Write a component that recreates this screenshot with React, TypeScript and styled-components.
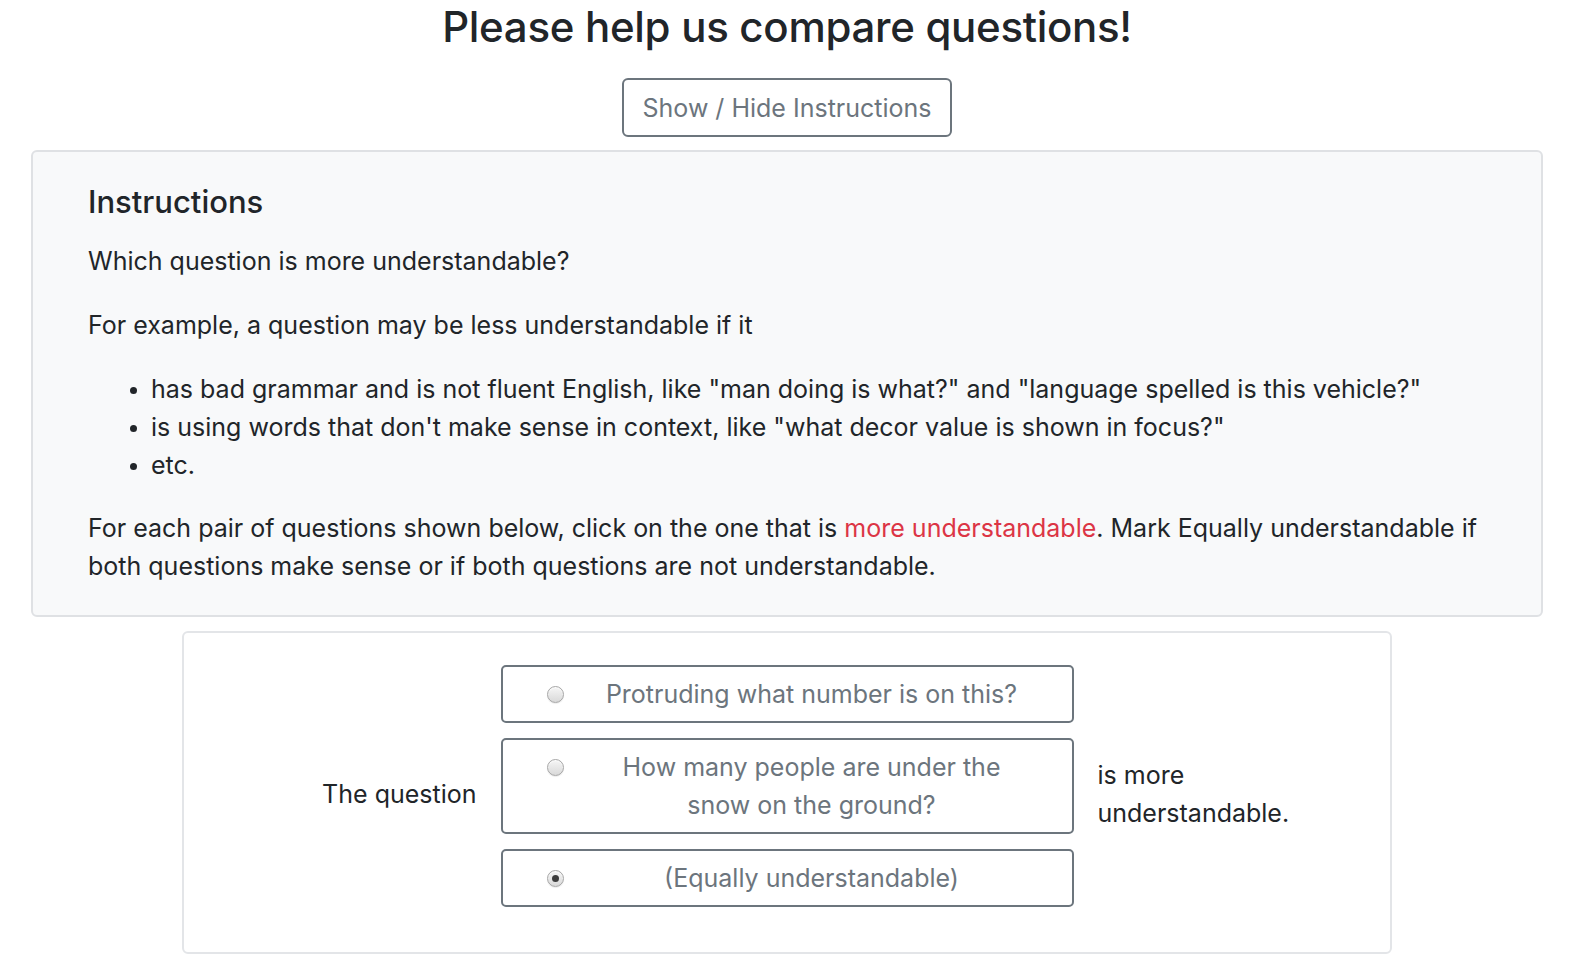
import React, { useState } from 'react';
import styled, { createGlobalStyle } from 'styled-components';

const GlobalStyle = createGlobalStyle`
  body {
    margin: 0;
    background: #fff;
    font-family: Inter, "Noto Sans", "Liberation Sans", sans-serif;
    color: #212529;
  }
`;

const Page = styled.div`
  display: flex;
  flex-direction: column;
  align-items: center;
  padding: 0 31px 12px;
`;

const Title = styled.h1`
  margin: 2px 0 0;
  font-size: 42px;
  font-weight: 500;
  line-height: 1.2;
  letter-spacing: -0.3px;
`;

const ToggleButton = styled.button`
  margin-top: 26px;
  width: 330px;
  height: 59px;
  border: 2px solid #6c757d;
  border-radius: 6px;
  background: #fff;
  color: #6c757d;
  font-family: inherit;
  font-size: 25px;
  cursor: pointer;
`;

const Panel = styled.section`
  align-self: stretch;
  margin-top: 13px;
  padding: 31px 55px 30px;
  background: #f8f9fa;
  border: 2px solid #dfe1e4;
  border-radius: 6px;
  font-size: 25px;
  line-height: 38px;
`;

const PanelHeading = styled.h3`
  margin: 0 0 22px;
  font-size: 31px;
  font-weight: 500;
  line-height: 37px;
`;

const Para = styled.p`
  margin: 0 0 26px;
  &:last-child {
    margin-bottom: 0;
  }
`;

const List = styled.ul`
  margin: 0 0 25px;
  padding-left: 63px;
  li::marker {
    font-size: 22px;
  }
`;

const Highlight = styled.span`
  color: #dc3545;
`;

const Card = styled.div`
  width: 1210px;
  box-sizing: border-box;
  margin-top: 14px;
  padding: 32px 0 30px;
  border: 2px solid #e3e5e8;
  border-radius: 6px;
  display: grid;
  grid-template-columns: 1fr 573px 1fr;
  column-gap: 24px;
  align-items: center;
  font-size: 25px;
  line-height: 38px;
`;

const SideLabel = styled.div<{ $align: 'left' | 'right' }>`
  text-align: ${({ $align }) => $align};
`;

const Options = styled.div`
  display: flex;
  flex-direction: column;
`;

const Option = styled.label`
  display: flex;
  align-items: center;
  min-height: 58px;
  box-sizing: border-box;
  margin-bottom: 15px;
  padding: 8px 0;
  border: 2px solid #6c757d;
  border-radius: 5px;
  color: #6c757d;
  cursor: pointer;
`;

const RadioCell = styled.span`
  width: 94px;
  flex-shrink: 0;
  box-sizing: border-box;
  display: flex;
  align-self: flex-start;
  padding: 11px 0 0 44px;
`;

const Radio = styled.span<{ $checked: boolean }>`
  width: 17px;
  height: 17px;
  box-sizing: border-box;
  border-radius: 50%;
  border: 1px solid #a6a6a6;
  background: linear-gradient(#f6f6f6, #d9d9d9);
  box-shadow: inset 0 1px 1px rgba(255, 255, 255, 0.8), 0 1px 1px rgba(0, 0, 0, 0.08);
  display: flex;
  align-items: center;
  justify-content: center;
  &::after {
    content: '';
    width: 7px;
    height: 7px;
    border-radius: 50%;
    background: #3d3d3d;
    display: ${({ $checked }) => ($checked ? 'block' : 'none')};
  }
`;

const OptionText = styled.span`
  flex: 1;
  padding-right: 45px;
  text-align: center;
`;

const options = [
  'Protruding what number is on this?',
  'How many people are under the snow on the ground?',
  '(Equally understandable)',
];

export default function App() {
  const [showInstructions, setShowInstructions] = useState(true);
  const [choice, setChoice] = useState(2);

  return (
    <Page>
      <GlobalStyle />
      <Title>Please help us compare questions!</Title>
      <ToggleButton onClick={() => setShowInstructions((v) => !v)}>
        Show / Hide Instructions
      </ToggleButton>
      {showInstructions && (
        <Panel>
          <PanelHeading>Instructions</PanelHeading>
          <Para>Which question is more understandable?</Para>
          <Para>For example, a question may be less understandable if it</Para>
          <List>
            <li>has bad grammar and is not fluent English, like "man doing is what?" and "language spelled is this vehicle?"</li>
            <li>is using words that don't make sense in context, like "what decor value is shown in focus?"</li>
            <li>etc.</li>
          </List>
          <Para>
            For each pair of questions shown below, click on the one that is{' '}
            <Highlight>more understandable</Highlight>. Mark Equally understandable if
            both questions make sense or if both questions are not understandable.
          </Para>
        </Panel>
      )}
      <Card>
        <SideLabel $align='right'>The question</SideLabel>
        <Options>
          {options.map((text, i) => (
            <Option key={text} onClick={() => setChoice(i)}>
              <RadioCell>
                <Radio $checked={choice === i} />
              </RadioCell>
              <OptionText>{text}</OptionText>
            </Option>
          ))}
        </Options>
        <SideLabel $align='left'>
          is more
          <br />
          understandable.
        </SideLabel>
      </Card>
    </Page>
  );
}
